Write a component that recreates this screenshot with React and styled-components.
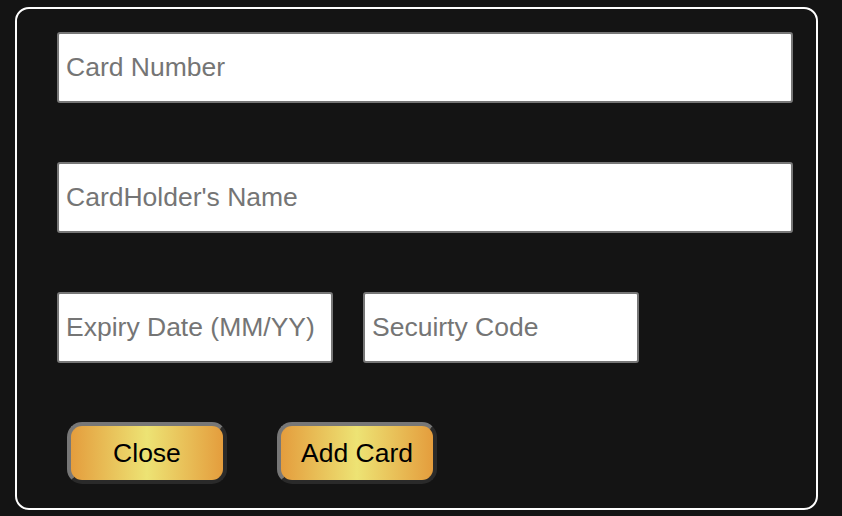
import React from 'react'
import styled, { createGlobalStyle } from 'styled-components';

const GlobalStyle = createGlobalStyle`
    body {
        margin: 0;
        background: #141414;
        font-family: "Liberation Sans", Arial, sans-serif;
    }
`;

const CardForm = styled.form`
    box-sizing: border-box;
    width: 803px;
    margin: 7px 0 0 15px;
    padding: 23px 0 24px 40px;
    border: 2px solid #ffffff;
    border-radius: 14px;
    display: flex;
    flex-direction: column;
    gap: 59px;
`;

const Row = styled.div`
    display: flex;
    gap: 30px;
`;

const ButtonRow = styled.div`
    display: flex;
    gap: 50px;
    padding-left: 10px;
`;

const Field = styled.input`
    box-sizing: border-box;
    width: ${props => props.$width || 736}px;
    height: 71px;
    margin: 0;
    padding: 0 7px;
    border: 2px solid #777777;
    border-radius: 3px;
    background: #ffffff;
    font-family: "Liberation Sans", Arial, sans-serif;
    font-size: 26.5px;
    color: #222;
    outline: none;

    &::placeholder {
        color: #757575;
    }
`;

const GoldButton = styled.button`
    box-sizing: border-box;
    width: 160px;
    height: 62px;
    border: 4px solid;
    border-color: #777777 #2a2a2a #2a2a2a #777777;
    border-radius: 15px;
    background: linear-gradient(90deg, #e49d3d 0%, #ede374 50%, #e49d3d 100%);
    font-family: "Liberation Sans", Arial, sans-serif;
    font-size: 26.5px;
    color: #000;
    padding: 0;
    cursor: pointer;
`;

function App() {

    return (
        <>
            <GlobalStyle />
            <CardForm onSubmit={e => e.preventDefault()}>
                <Field type="text" placeholder="Card Number" />
                <Field type="text" placeholder="CardHolder's Name" />
                <Row>
                    <Field $width={276} type="text" placeholder="Expiry Date (MM/YY)" />
                    <Field $width={276} type="text" placeholder="Secuirty Code" />
                </Row>
                <ButtonRow>
                    <GoldButton type="button">Close</GoldButton>
                    <GoldButton type="submit">Add Card</GoldButton>
                </ButtonRow>
            </CardForm>
        </>
    )
}

export default App
